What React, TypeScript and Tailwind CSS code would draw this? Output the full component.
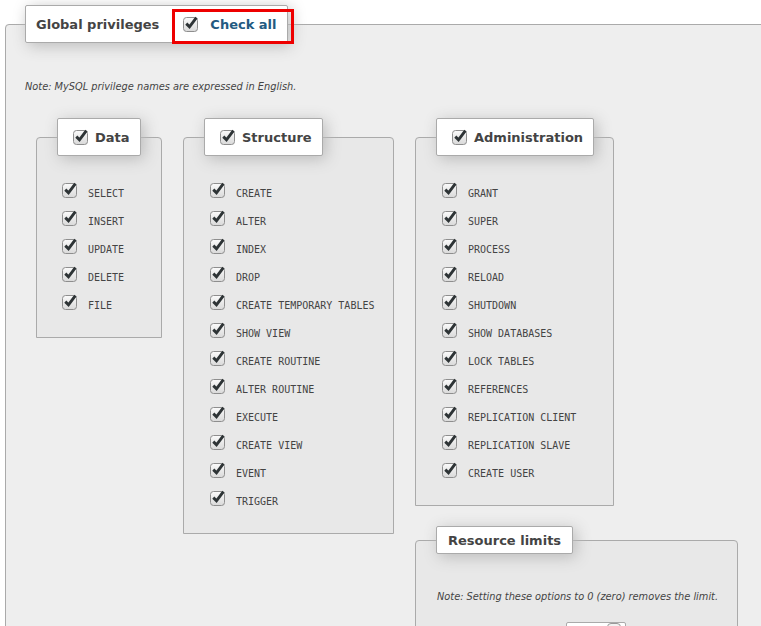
import React from "react";

const Check = ({ className = "" }: { className?: string }) => (
  <svg width="16" height="17" viewBox="0 0 16 17" className={className}>
    <defs>
      <linearGradient id="cbg" x1="0" y1="0" x2="0" y2="1">
        <stop offset="0" stopColor="#fbfbfb" />
        <stop offset="1" stopColor="#d9d9d9" />
      </linearGradient>
    </defs>
    <rect x="0.5" y="1.5" width="14" height="14" rx="3" fill="url(#cbg)" stroke="#8e8e8e" />
    <path d="M3.3 7.6 L6.5 10.8 L13.4 1.6" fill="none" stroke="#2e3436" strokeWidth="2.9" />
  </svg>
);

const Row = ({ label }: { label: string }) => (
  <div className="flex h-7 items-start">
    <Check className="mt-[5px] shrink-0" />
    <span className="ml-[10px] mt-[11px] whitespace-nowrap font-['DejaVu_Sans_Mono',monospace] text-[10px] leading-[12px] text-[#444]">
      {label}
    </span>
  </div>
);

const Group = ({
  title,
  items,
  width,
  pad,
}: {
  title: string;
  items: string[];
  width: string;
  pad: string;
}) => (
  <fieldset className={`${width} shrink-0 rounded-t-[4px] border border-[#aaa] bg-[#e8e8e8] p-0`}>
    <legend className="ml-5 rounded-[2px] border border-[#aaa] bg-white shadow-[3px_3px_15px_#bbb]">
      <div className="flex h-[36px] items-center pl-[15px] pr-[10px]">
        <Check className="shrink-0" />
        <span className="ml-[6px] pt-[1px] text-[13px] font-bold text-[#444]">{title}</span>
      </div>
    </legend>
    <div className={`pb-[20px] pt-[21px] ${pad}`}>
      {items.map((i) => (
        <Row key={i} label={i} />
      ))}
    </div>
  </fieldset>
);

export default function App() {
  return (
    <div className="h-[626px] w-[761px] overflow-hidden bg-white p-[5px] font-['DejaVu_Sans',sans-serif]">
      <fieldset className="w-[830px] rounded-tl-[4px] border border-[#aaa] bg-[#eee] p-0">
        <legend className="relative ml-[19px] rounded-[2px] border border-[#aaa] bg-white shadow-[3px_3px_15px_#bbb]">
          <div className="flex h-[36px] items-center pl-[10px] pr-[10px]">
            <span className="pt-[1px] text-[13px] font-bold text-[#444]">Global privileges</span>
            <Check className="ml-[24px] shrink-0" />
            <span className="ml-[11px] pt-[1px] text-[13px] font-bold text-[#235a81]">Check all</span>
          </div>
          <div className="pointer-events-none absolute left-[146px] top-[3px] h-[35px] w-[122px] border-[3px] border-[#ee0000]" />
        </legend>
        <div className="pl-[19px] pt-[38px] text-[9.8px] italic leading-[12px] text-[#444]">
          Note: MySQL privilege names are expressed in English.
        </div>
        <div className="mt-[25px] flex items-start gap-[21px] pl-[30px]">
          <Group
            title="Data"
            width="w-[126px]"
            pad="pl-[25px]"
            items={["SELECT", "INSERT", "UPDATE", "DELETE", "FILE"]}
          />
          <Group
            title="Structure"
            width="w-[211px]"
            pad="pl-[26px]"
            items={[
              "CREATE",
              "ALTER",
              "INDEX",
              "DROP",
              "CREATE TEMPORARY TABLES",
              "SHOW VIEW",
              "CREATE ROUTINE",
              "ALTER ROUTINE",
              "EXECUTE",
              "CREATE VIEW",
              "EVENT",
              "TRIGGER",
            ]}
          />
          <div className="flex flex-col items-start">
            <Group
              title="Administration"
              width="w-[199px]"
              pad="pl-[26px]"
              items={[
                "GRANT",
                "SUPER",
                "PROCESS",
                "RELOAD",
                "SHUTDOWN",
                "SHOW DATABASES",
                "LOCK TABLES",
                "REFERENCES",
                "REPLICATION CLIENT",
                "REPLICATION SLAVE",
                "CREATE USER",
              ]}
            />
            <fieldset className="mt-[20px] w-[323px] rounded-t-[4px] border border-[#aaa] bg-[#e8e8e8] p-0">
              <legend className="ml-5 rounded-[2px] border border-[#aaa] bg-white shadow-[3px_3px_15px_#bbb]">
                <div className="flex h-[26px] items-center px-[11px]">
                  <span className="pt-[1px] text-[13px] font-bold text-[#444]">Resource limits</span>
                </div>
              </legend>
              <div className="pl-[21px] pt-[37px] text-[9.8px] italic leading-[12px] text-[#444]">
                Note: Setting these options to 0 (zero) removes the limit.
              </div>
              <div className="ml-[150px] mt-[19px] flex h-[22px] w-[60px] items-start justify-end rounded-[2px] border border-[#aaa] bg-white pr-[4px]">
                <div className="h-[16px] w-[14px] rounded-[4px] border border-[#999] bg-[#f2f2f2]" />
              </div>
              <div className="h-[40px]" />
            </fieldset>
          </div>
        </div>
        <div className="h-[80px]" />
      </fieldset>
    </div>
  );
}
